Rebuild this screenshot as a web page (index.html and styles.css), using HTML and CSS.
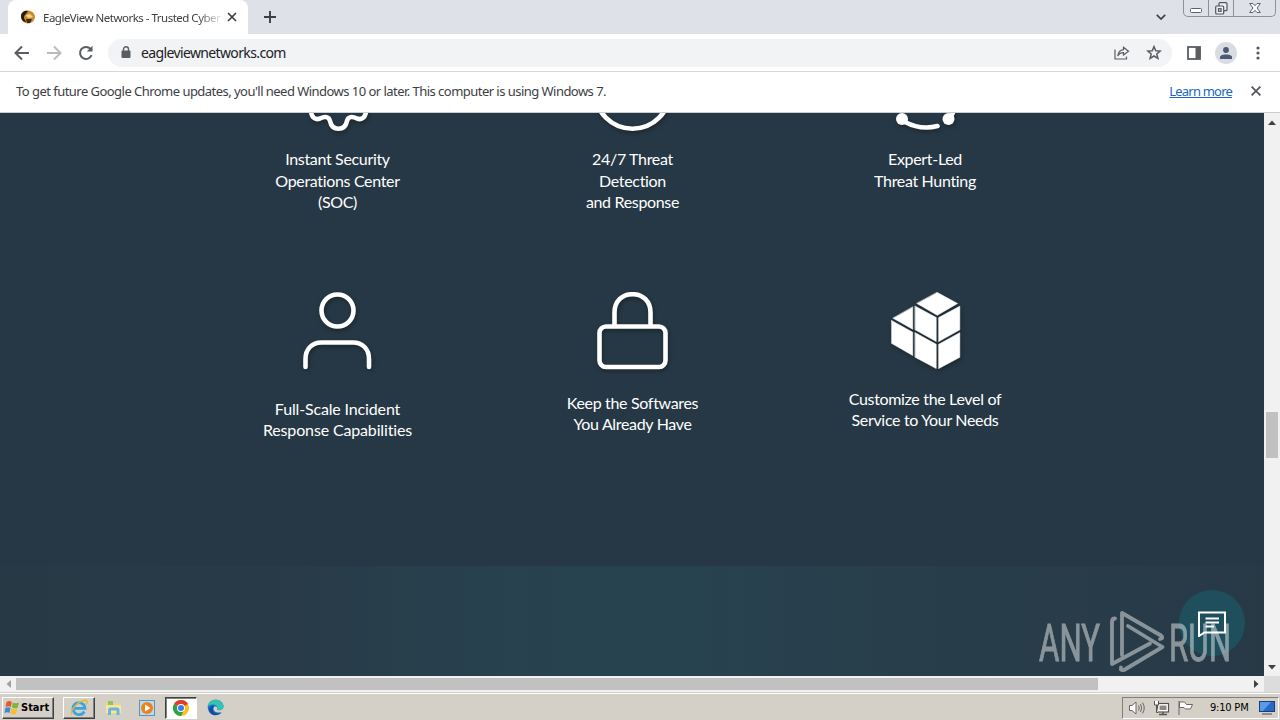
FILE: index.html
```html
<!DOCTYPE html>
<html lang="en">
<head>
    <meta charset="UTF-8">
    <meta name="viewport" content="width=device-width, initial-scale=1.0">
    <title>EagleView Networks - Trusted Cyber</title>
    <link rel="stylesheet" href="styles.css">
</head>
<body>
    <div class="screen">
        <header class="tab-strip">
            <div class="tab">
                <svg class="favicon" width="16" height="16" viewBox="0 0 16 16">
                    <ellipse cx="8" cy="8" rx="7" ry="6.5" fill="#c98b2b" />
                    <path d="M1 7C1 3 5 1 8 2L6 5C4 6 4 8 4 9L6 13C3 13 1 10 1 7z" fill="#241d14" />
                    <path d="M6 6L10 5L13 8L9 9L7 8z" fill="#f5d489" />
                    <path d="M6 10L12 10L10 14L7 14z" fill="#3b2a16" />
                </svg>
                <span class="tab-title">EagleView Networks - Trusted Cyber</span>
                <svg class="tab-close" width="10" height="10" viewBox="0 0 10 10" stroke="#3c4043" stroke-width="1.7">
                    <path d="M1 1L9 9M9 1L1 9" />
                </svg>
            </div>
            <svg class="new-tab" width="12" height="12" viewBox="0 0 12 12" stroke="#3c4043" stroke-width="1.9">
                <path d="M6 0V12M0 6H12" />
            </svg>
            <svg class="tab-search" width="10" height="6" viewBox="0 0 10 6" fill="none" stroke="#3c4043" stroke-width="1.7">
                <path d="M.8 .8L5 5L9.2 .8" />
            </svg>
            <div class="window-buttons">
                <span class="win-btn win-min">
                    <svg width="12" height="5" viewBox="0 0 12 5" fill="#fff" stroke="#5d626b">
                        <rect x=".5" y=".5" width="11" height="4" rx="1" />
                    </svg>
                </span>
                <span class="win-btn win-max">
                    <svg width="13" height="13" viewBox="0 0 13 13" fill="#eef0f4" stroke="#4f545d" stroke-width="1.2">
                        <rect x="4" y=".7" width="8" height="8" rx="1" />
                        <rect x=".7" y="4" width="8" height="8" rx="1" />
                        <rect x="3.5" y="6.7" width="2.6" height="2.6" />
                    </svg>
                </span>
                <span class="win-btn win-close">
                    <svg width="12" height="10" viewBox="0 0 12 10" fill="#fff" stroke="#5d626b">
                        <path d="M.7 .5H4L6 2.7L8 .5H11.3L8 5L11.3 9.5H8L6 7.3L4 9.5H.7L4 5z" />
                    </svg>
                </span>
            </div>
        </header>

        <nav class="toolbar">
            <svg class="nav-icon" width="16" height="16" viewBox="0 0 16 16" fill="none" stroke="#5a5e63" stroke-width="2">
                <path d="M15 8H2M8 1.5L1.5 8L8 14.5" />
            </svg>
            <svg class="nav-icon" width="16" height="16" viewBox="0 0 16 16" fill="none" stroke="#b9bbbe" stroke-width="2">
                <path d="M1 8H14M8 1.5L14.5 8L8 14.5" />
            </svg>
            <svg class="nav-icon" width="16" height="16" viewBox="0 0 16 16" fill="none" stroke="#5a5e63" stroke-width="2">
                <path d="M13.6 10.2A6 6 0 1 1 12.4 3.8L14 5.5" />
                <path d="M14.5 .8V6.5H8.8z" fill="#5a5e63" stroke="none" />
            </svg>
            <div class="omnibox">
                <svg width="10" height="13" viewBox="0 0 10 13">
                    <rect x=".5" y="4.5" width="9" height="7.5" rx="1" fill="#5a5e63" />
                    <path d="M2.5 5V3.3A2.5 2.5 0 0 1 7.5 3.3V5" fill="none" stroke="#5a5e63" stroke-width="1.4" />
                </svg>
                <span class="url">eagleviewnetworks.com</span>
                <svg width="16" height="14" viewBox="0 0 16 14" fill="none" stroke="#5a5e63" stroke-width="1.2">
                    <path d="M1 3.5V13H12.5V10.5" />
                    <path d="M9.5 1.2L14.5 5.2L9.5 9V6.7C6.7 6.6 5 7.8 3.8 10C4.2 6.3 6 4 9.5 3.6z" />
                </svg>
                <svg class="star" width="16" height="15" viewBox="0 0 16 15" fill="none" stroke="#5a5e63" stroke-width="1.5">
                    <path d="M8 1.6L9.8 5.7L14.2 6.1L10.8 9L11.9 13.4L8 11L4.1 13.4L5.2 9L1.8 6.1L6.2 5.7z" />
                </svg>
            </div>
            <svg class="side-panel" width="14" height="14" viewBox="0 0 14 14">
                <rect x="1" y="1" width="12" height="12" fill="none" stroke="#5a5e63" stroke-width="1.8" />
                <rect x="8.5" y="1" width="5" height="12" fill="#5a5e63" />
            </svg>
            <span class="avatar">
                <svg width="12" height="12" viewBox="0 0 12 12" fill="#4b5876">
                    <circle cx="6" cy="3" r="2.9" />
                    <path d="M0 12V10C0 6.6 12 6.6 12 10V12z" />
                </svg>
            </span>
            <svg class="menu-dots" width="4" height="14" viewBox="0 0 4 14" fill="#55585c">
                <circle cx="2" cy="2" r="1.6" />
                <circle cx="2" cy="7" r="1.6" />
                <circle cx="2" cy="12" r="1.6" />
            </svg>
        </nav>

        <div class="infobar">
            <span class="infobar-text">To get future Google Chrome updates, you'll need Windows 10 or later. This computer is using Windows 7.</span>
            <a class="learn-more" href="#">Learn more</a>
            <svg width="10" height="10" viewBox="0 0 10 10" stroke="#55585c" stroke-width="1.8">
                <path d="M.6 .6L9.4 9.4M9.4 .6L.6 9.4" />
            </svg>
        </div>

        <div class="viewport">
            <main class="page">
                <section class="features">
                    <div class="feature">
                        <svg class="feature-icon" width="80" height="78" viewBox="0 0 80 78">
                            <path d="M13 57C13 64 17 67.500 22 65.500C27 63 31 63.500 32 68C33 73 36 75.700 40.500 75.700C45 75.700 48 73 49 68C50 63.500 54 63 59 65.500C64 67.500 68 64 68 57" />
                        </svg>
                        <p>Instant Security<br>Operations Center<br>(SOC)</p>
                    </div>
                    <div class="feature">
                        <svg class="feature-icon" width="80" height="78" viewBox="0 0 80 78">
                            <circle cx="39.500" cy="38" r="37.7" />
                        </svg>
                        <p>24/7 Threat<br>Detection<br>and Response</p>
                    </div>
                    <div class="feature">
                        <svg class="feature-icon" width="80" height="78" viewBox="0 0 80 78">
                            <path d="M20 69Q36 77.5 52.5 73M63 66Q67 63 68.500 58" />
                            <circle class="solid" cx="17" cy="66" r="6" />
                            <circle class="solid" cx="63.500" cy="66" r="6" />
                        </svg>
                        <p>Expert-Led<br>Threat Hunting</p>
                    </div>
                    <div class="feature feature-incident">
                        <svg class="feature-icon" width="80" height="78" viewBox="0 0 80 78">
                            <circle cx="39.500" cy="18.500" r="16" />
                            <path d="M7.500 75V67C7.500 57 14 50.500 23.500 50.500H55C64.500 50.500 71 57 71 67V75" />
                        </svg>
                        <p>Full-Scale Incident<br>Response Capabilities</p>
                    </div>
                    <div class="feature feature-software">
                        <svg class="feature-icon" width="80" height="78" viewBox="0 0 80 78">
                            <path d="M21.500 34V20.500C21.500 9.500 29 2.200 39.500 2.200S57.500 9.500 57.500 20.500V34" />
                            <rect x="6.500" y="34.500" width="66" height="40.500" rx="6.500" />
                        </svg>
                        <p>Keep the Softwares<br>You Already Have</p>
                    </div>
                    <div class="feature feature-custom">
                        <svg class="feature-icon blocks" width="80" height="78" viewBox="0 0 80 78">
                            <path d="M52.300 .5L72.500 11.500L52.300 23.300L32 11.500z" />
                            <path d="M30.200 14.200L51.200 25.500V49.500L30.200 37.800z" />
                            <path d="M53.800 25.500L74.800 14.200V37.800L53.800 49.500z" />
                            <path d="M30.200 40.700L51.200 52.300V76.500L30.200 65.300z" />
                            <path d="M53.800 52.300L74.800 40.700V65.300L53.800 76.500z" />
                            <path d="M6.500 28.500L27.700 40.200V63.500L6.500 51.300z" />
                            <path d="M27.700 15.200V37.200L8.200 26.300z" />
                        </svg>
                        <p>Customize the Level of<br>Service to Your Needs</p>
                    </div>
                </section>
                <section class="band"></section>

                <div class="chat-button">
                    <svg width="28" height="28" viewBox="0 0 28 28" fill="none" stroke="#fff" stroke-width="2">
                        <path d="M1 3.500H27V23.500H6.500L1 27zM7.500 9.500H21M7.500 13.500H21M7.500 17.500H16" />
                    </svg>
                </div>
                <svg class="watermark" width="204" height="64" viewBox="0 0 204 64">
                    <text x="2" y="50.500" textLength="61" lengthAdjust="spacingAndGlyphs">ANY</text>
                    <text x="132" y="50.500" textLength="62" lengthAdjust="spacingAndGlyphs">RUN</text>
                    <g class="watermark-mark">
                        <path d="M78 8.500C76 8.500 75 10 75 12V54L113 33.500" />
                        <path d="M85 45V3L124 25.500Q127 28 123 29" />
                        <path d="M91 16L125.500 37L87 60Q83 61 84 57.500" />
                    </g>
                </svg>
            </main>
            <div class="scroll-y">
                <svg width="8" height="5" viewBox="0 0 8 5"><path d="M0 5L4 .5L8 5z" /></svg>
                <div class="scroll-y-thumb"></div>
                <svg class="arrow-down" width="8" height="5" viewBox="0 0 8 5"><path d="M0 0L4 4.500L8 0z" /></svg>
            </div>
        </div>

        <div class="scroll-x">
            <svg width="5" height="8" viewBox="0 0 5 8" fill="#a0a0a0"><path d="M5 0L.5 4L5 8z" /></svg>
            <div class="scroll-x-thumb"></div>
            <svg class="arrow-right" width="5" height="8" viewBox="0 0 5 8" fill="#404040"><path d="M0 0L4.500 4L0 8z" /></svg>
            <span class="scroll-corner"></span>
        </div>

        <footer class="taskbar">
            <button class="start-button">
                <svg width="16" height="15" viewBox="0 0 15 15">
                    <path d="M2 2Q5 0 7.300 2L6.300 7Q4 5.500 1 7z" fill="#e65a28" />
                    <path d="M8.300 2.500Q11 4 14.500 2.500L13 8Q10 9 7.300 7.300z" fill="#7db63a" />
                    <path d="M.8 8Q4 6.500 6 8L5 13Q3 11.500 0 13z" fill="#3f87d9" />
                    <path d="M7 8.300Q10 10 12.800 9L11.500 14Q8.500 15 6 13.500z" fill="#f4c02c" />
                </svg>
                <span>Start</span>
            </button>
            <span class="task task-raised">
                <svg width="18" height="18" viewBox="0 0 18 18" fill="none">
                    <path d="M14.300 12.500A6 6 0 1 1 15 9.300H4" stroke="#3ba3df" stroke-width="2.800" />
                    <path d="M2 15.500C-1 13 7 3 14 1.500C18 .5 17.500 4 16 6" stroke="#e9b92d" stroke-width="1.400" />
                </svg>
            </span>
            <span class="task">
                <svg width="17" height="16" viewBox="0 0 17 16">
                    <path d="M1 2H6L7 3.500H15V14H1z" fill="#ecd37b" />
                    <path d="M3 1H8V5H3z" fill="#8fc55b" />
                    <path d="M1 5H16V13H1z" fill="#f7e6a0" />
                    <path d="M3 15V10Q3 7.500 5.500 7.500H12Q14.500 7.500 14.500 10V15H11.500V10.500H6V15z" fill="#69b5dc" />
                </svg>
            </span>
            <span class="task">
                <svg width="16" height="16" viewBox="0 0 16 16">
                    <rect x=".5" y=".5" width="15" height="15" fill="#b9dbf2" stroke="#5c93bd" />
                    <circle cx="8" cy="8" r="6" fill="#f08019" />
                    <path d="M6 4.500L11.500 8L6 11.500z" fill="#fff" />
                </svg>
            </span>
            <span class="task task-active">
                <svg width="16" height="16" viewBox="0 0 16 16">
                    <circle cx="8" cy="8" r="8" fill="#fbc116" />
                    <path d="M8 8L1.070 4A8 8 0 0 1 14.930 4z" fill="#e33b2e" />
                    <path d="M8 8L1.070 4A8 8 0 0 0 8 16L11 10z" fill="#2ba24c" />
                    <circle cx="8" cy="8" r="4" fill="#fff" />
                    <circle cx="8" cy="8" r="3" fill="#3b7de9" />
                </svg>
            </span>
            <span class="task">
                <svg width="17" height="17" viewBox="0 0 17 17">
                    <path d="M.7 8C1-1 15-2 16.500 7C17 11 12 12 10 10.500C11 8 9 7 7 8C5 11 9 15 14.500 13C11 18 1 17 .7 8z" fill="#1478cf" />
                    <path d="M.7 7.500C2-1 14-2 16.500 7C17 11 12 12 10 10.500C12 6 6 3.500 .7 7.500z" fill="#35c4b0" />
                    <path d="M6 9C5 13 9 16 14.500 13.500C11 18 3 17 2 11C2 8 5 6 7 7z" fill="#174d9c" />
                </svg>
            </span>
            <div class="tray">
                <svg width="18" height="16" viewBox="0 0 18 16" fill="none" stroke="#6b6862">
                    <path d="M1.500 5.500H4L8 2V14L4 10.500H1.500z" fill="#fff" />
                    <path d="M10.500 5.500Q12 8 10.500 10.500M12.500 4Q15 8 12.500 12M14.500 2.500Q18 8 14.500 13.500" />
                </svg>
                <svg width="17" height="16" viewBox="0 0 17 16" fill="#fff" stroke="#55524d">
                    <rect x="4.500" y="3.500" width="11" height="8.500" stroke-width="1.200" />
                    <rect x="6.500" y="5.500" width="7" height="4.500" fill="#8b8984" stroke="none" />
                    <path d="M6 14.500H14M10 12V14" stroke-width="1.500" />
                    <path d="M1.500 1V5H5.500V1M3.500 5V12.500H5" />
                </svg>
                <svg width="17" height="16" viewBox="0 0 17 16" fill="#fff" stroke="#6b6862">
                    <path d="M2 15V1M2.500 2H7.500L9.500 4.500H15.500L13.500 9H8.500L7 7.500H2.500z" />
                </svg>
                <span class="clock">9:10 PM</span>
                <svg class="show-desktop" width="16" height="14" viewBox="0 0 16 14">
                    <rect x=".5" y=".5" width="15" height="10" fill="#2769c8" stroke="#1b3d78" />
                    <path d="M1 1H12L4 10H1z" fill="#5a9be8" />
                    <path d="M3 13H13" stroke="#777" stroke-width="1.500" />
                </svg>
            </div>
        </footer>
    </div>
</body>
</html>
```
FILE: styles.css
```css
* {
    box-sizing: border-box;
}

body {
    margin: 0;
    font-family: "Noto Sans", "Open Sans", sans-serif;
    overflow: hidden;
}

svg {
    display: block;
    flex-shrink: 0;
}

.screen {
    width: 1280px;
    height: 720px;
    display: flex;
    flex-direction: column;
    background-color: #fff;
}

/* browser chrome */
.tab-strip {
    height: 34px;
    display: flex;
    align-items: flex-start;
    background-color: #dee1e8;
    padding-left: 8px;
}

.tab {
    width: 240px;
    height: 34px;
    display: flex;
    align-items: center;
    padding-left: 12px;
    background-color: #fff;
    border-radius: 8px 8px 0 0;
}

.tab-title {
    width: 178px;
    margin-left: 7px;
    font-size: 11.5px;
    letter-spacing: -0.5px;
    color: #3c4043;
    white-space: nowrap;
    -webkit-mask-image: linear-gradient(to right, #000 155px, rgba(0, 0, 0, 0.2) 175px);
    mask-image: linear-gradient(to right, #000 155px, rgba(0, 0, 0, 0.2) 175px);
}

.tab-close {
    margin-left: 6px;
}

.new-tab {
    margin: 11px 0 0 16px;
}

.tab-search {
    margin: 14px 17px 0 auto;
}

.window-buttons {
    display: flex;
    width: 93px;
    height: 17px;
    margin-right: 4px;
    border: 1px solid #8d919b;
    border-top: 0;
    border-radius: 0 0 5px 5px;
}

.win-btn {
    display: flex;
    align-items: center;
    justify-content: center;
    border-right: 1px solid #8d919b;
}

.win-min {
    width: 25px;
    padding-top: 5px;
}

.win-max {
    width: 25px;
}

.win-close {
    flex: 1;
    border-right: 0;
}

.toolbar {
    height: 38px;
    display: flex;
    align-items: center;
    padding: 0 20px 0 14px;
    border-bottom: 1px solid #d5d7da;
}

.nav-icon {
    margin-right: 16px;
}

.omnibox {
    width: 1064px;
    height: 28px;
    display: flex;
    align-items: center;
    margin-left: -2px;
    padding: 0 10px 0 13px;
    border-radius: 14px;
    background-color: #f1f3f4;
}

.url {
    flex: 1;
    margin-left: 10px;
    font-size: 14px;
    letter-spacing: -0.63px;
    color: #202124;
}

.star {
    margin-left: 16px;
}

.side-panel {
    margin-left: 15px;
}

.avatar {
    width: 22px;
    height: 22px;
    display: flex;
    align-items: center;
    justify-content: center;
    margin-left: 14px;
    border-radius: 50%;
    background-color: #d9dce2;
}

.menu-dots {
    margin-left: auto;
}

.infobar {
    height: 41px;
    display: flex;
    align-items: center;
    padding: 0 19px 2px 16px;
    border-bottom: 1px solid #c9ccd0;
    font-size: 13px;
    color: #3c4043;
}

.infobar-text {
    flex: 1;
    letter-spacing: -0.535px;
}

.learn-more {
    margin-right: 19px;
    letter-spacing: -0.8px;
    color: #1a66c2;
}

/* page */
.viewport {
    display: flex;
    height: 563px;
}

.page {
    position: relative;
    width: 1264px;
    overflow: hidden;
    background-color: #263845;
}

.features {
    display: grid;
    grid-template-columns: 295px 295px 290px;
    grid-template-rows: 179px 274px;
    padding-left: 190px;
}

.feature {
    display: flex;
    flex-direction: column;
    align-items: center;
    color: #fff;
}

.feature:nth-child(-n+3) .feature-icon {
    margin-top: -60px;
}

.feature p {
    margin: 17px 0 0;
    font-family: Lato, sans-serif;
    font-size: 16px;
    line-height: 21.5px;
    letter-spacing: -0.33px;
    text-align: center;
    white-space: nowrap;
}

.feature-icon {
    fill: none;
    stroke: #fff;
    stroke-width: 4.6;
    stroke-linecap: round;
    filter: drop-shadow(1px 2px 2px rgba(20, 25, 30, 0.6));
}

.feature-icon .solid {
    fill: #fff;
    stroke: none;
}

.blocks {
    fill: #fff;
    stroke: #fff;
    stroke-width: 0.6;
    stroke-linejoin: round;
}

.feature.feature-incident p {
    margin-top: 27.5px;
    letter-spacing: -0.15px;
}

.feature.feature-software p {
    margin-top: 21.5px;
}

.feature.feature-custom p {
    margin-top: 17.5px;
}

.band {
    height: 110px;
    background: linear-gradient(to right, #283946 0, #283947 20%, #283f4c 32%, #27434f 46%, #27434f 54%, #283f4c 66%, #283c49 85%, #283946 100%);
}

.chat-button {
    position: absolute;
    left: 1179px;
    top: 477px;
    width: 66px;
    height: 66px;
    display: flex;
    align-items: center;
    justify-content: center;
    border-radius: 50%;
    background-color: #1f4f5c;
}

.watermark {
    position: absolute;
    left: 1037px;
    top: 497px;
    font-family: Roboto, sans-serif;
    font-size: 51px;
    fill: #fff;
    stroke: #fff;
    stroke-width: 0.9;
    opacity: 0.45;
}

.watermark-mark {
    fill: none;
    stroke-width: 3.8;
    stroke-linejoin: round;
    stroke-linecap: round;
}

/* scrollbars */
.scroll-y {
    width: 16px;
    display: flex;
    flex-direction: column;
    align-items: center;
    padding: 7px 0 6px;
    background-color: #f1f1f1;
    fill: #404040;
}

.scroll-y-thumb {
    width: 12px;
    height: 46px;
    margin-top: 287px;
    background-color: #c1c1c1;
}

.arrow-down {
    margin-top: auto;
}

.scroll-x {
    height: 16px;
    display: flex;
    align-items: center;
    padding-left: 6px;
    background-color: #f1f1f1;
}

.scroll-x-thumb {
    width: 1082px;
    height: 12px;
    margin-left: 5px;
    background-color: #c1c1c1;
}

.arrow-right {
    margin-left: auto;
    margin-right: 5px;
}

.scroll-corner {
    width: 16px;
    height: 16px;
    background-color: #dcdcdc;
}

/* taskbar */
.taskbar {
    height: 28px;
    display: flex;
    align-items: center;
    padding: 2px 0 0 2px;
    background-color: #d4d0c8;
    border-top: 1px solid #d4d0c8;
    box-shadow: inset 0 1px 0 #fff;
}

.start-button {
    width: 52px;
    height: 22px;
    display: flex;
    align-items: center;
    gap: 1px;
    margin-right: 9px;
    padding: 0 0 0 1px;
    border: 1px solid;
    border-color: #fff #404040 #404040 #fff;
    box-shadow: inset -1px -1px 0 #808080;
    background-color: #d4d0c8;
    font-family: "DejaVu Sans Condensed", "DejaVu Sans", sans-serif;
    font-size: 11px;
    font-weight: bold;
    color: #000;
}

.task {
    width: 32px;
    height: 22px;
    display: flex;
    align-items: center;
    justify-content: center;
    margin-right: 2px;
    border: 1px solid transparent;
}

.task-raised {
    border-color: #fff #404040 #404040 #fff;
    box-shadow: inset -1px -1px 0 #808080;
}

.task-active {
    border-color: #404040 #fff #fff #404040;
    background-color: #fff;
    box-shadow: inset 1px 1px 0 #808080;
}

.tray {
    width: 157px;
    height: 22px;
    display: flex;
    align-items: center;
    gap: 7px;
    margin-left: auto;
    margin-right: 1px;
    padding-left: 5px;
    border: 1px solid;
    border-color: #808080 #fff #fff #808080;
}

.clock {
    margin-left: 9px;
    font-family: "DejaVu Sans Condensed", "DejaVu Sans", sans-serif;
    font-size: 11px;
    letter-spacing: -0.2px;
    color: #000;
    white-space: nowrap;
}

.show-desktop {
    margin-left: 4px;
}
```
